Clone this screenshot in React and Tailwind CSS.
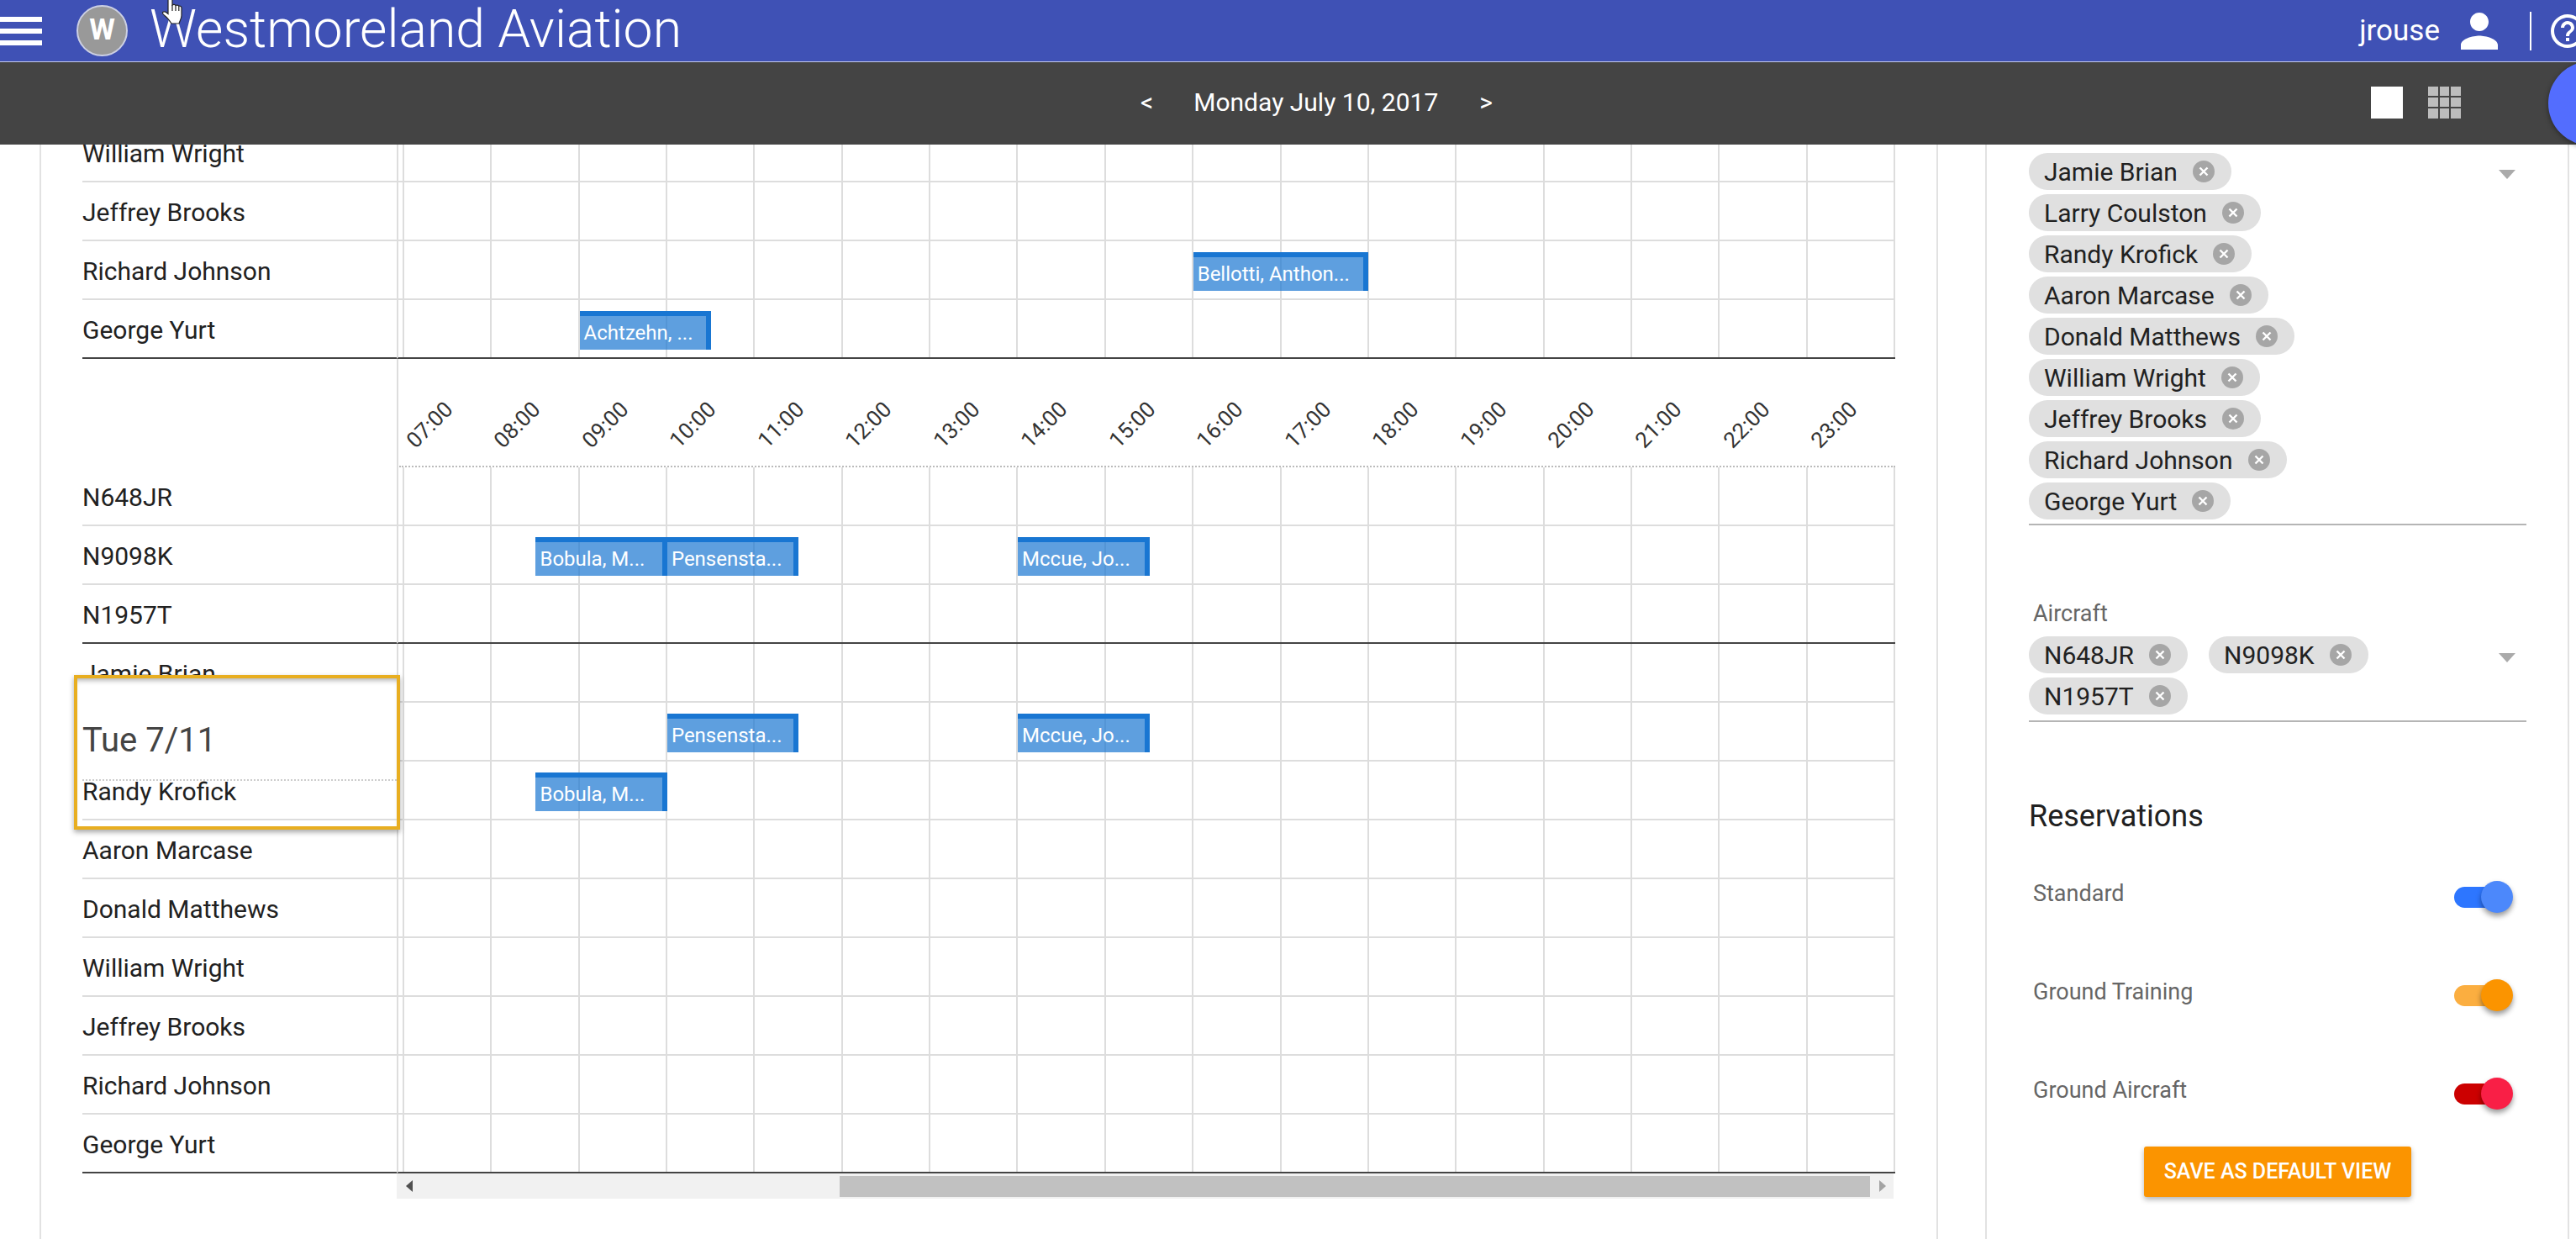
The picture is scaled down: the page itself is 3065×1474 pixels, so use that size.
const HOURS = ["07:00","08:00","09:00","10:00","11:00","12:00","13:00","14:00","15:00","16:00","17:00","18:00","19:00","20:00","21:00","22:00","23:00"];
const COL = 104.3;

const PILOTS = ["Jamie Brian","Larry Coulston","Randy Krofick","Aaron Marcase","Donald Matthews","William Wright","Jeffrey Brooks","Richard Johnson","George Yurt"];
const AIRCRAFT = ["N648JR","N9098K","N1957T"];

function Block({ start, end, text }) {
  return (
    <div
      className="absolute top-[13px] h-[46px] z-10 bg-[#1976d2]/70 border-t-[6px] border-r-[6px] border-[#1976d2] pl-[5px] text-white text-[24px] leading-[40px] whitespace-nowrap overflow-hidden"
      style={{ left: start * COL + 2, width: (end - start) * COL }}
    >
      {text}
    </div>
  );
}

function Row({ label, blocks = [], dark }) {
  const line = dark ? "border-[#444444]" : "border-[#dddddd]";
  return (
    <div className="flex h-[70px]">
      <div className={`w-[374px] shrink-0 flex items-center pt-[3px] border-b-2 text-[30px] text-[#212121] ${line}`}>{label}</div>
      <div className={`w-[1783px] shrink-0 pl-[5px] border-l-2 border-b-2 border-l-[#dddddd] ${dark ? "border-b-[#444444]" : "border-b-[#dddddd]"}`}>
        <div className="relative h-full grid grid-cols-17 border-r-2 border-r-[#dddddd]">
          {HOURS.map((h) => (
            <div key={h} className="border-l-2 border-[#dddddd]" />
          ))}
          {blocks.map((b) => (
            <Block key={b.text + b.start} {...b} />
          ))}
        </div>
      </div>
    </div>
  );
}

function Axis() {
  return (
    <div className="flex h-[129px]">
      <div className="w-[374px] shrink-0" />
      <div className="w-[1783px] shrink-0 border-l-2 border-[#dddddd]">
        <div className="ml-[1px] h-full pl-[4px] border-b-2 border-dotted border-[#bbbbbb]">
          <div className="grid grid-cols-17 h-[127px] pt-[29px] items-center">
            {HOURS.map((h) => (
              <div key={h} className="flex justify-center pr-[40px]">
                <span className="-rotate-45 text-[26px] text-[#333333] whitespace-nowrap">{h}</span>
              </div>
            ))}
          </div>
        </div>
      </div>
    </div>
  );
}

function Chip({ text }) {
  return (
    <div className="h-[44px] rounded-full bg-[#e0e0e0] pl-[18px] pr-[20px] flex items-center gap-[18px] text-[30px] text-[#212121] whitespace-nowrap">
      {text}
      <svg width="26" height="26" viewBox="0 0 26 26" className="shrink-0">
        <circle cx="13" cy="13" r="13" fill="#a6a6a6" />
        <path d="M8.5 8.5l9 9M17.5 8.5l-9 9" stroke="#ffffff" strokeWidth="2.4" />
      </svg>
    </div>
  );
}

function Caret() {
  return (
    <svg width="20" height="11" viewBox="0 0 20 11" className="absolute right-[13px] top-[20px]">
      <polygon points="0,0 20,0 10,11" fill="#aaaaaa" />
    </svg>
  );
}

function Toggle({ label, track, thumb }) {
  return (
    <div className="h-[60px] flex items-center justify-between pl-[5px] pr-[16px]">
      <span className="text-[27px] text-[#666666] pb-[8px]">{label}</span>
      <div className="relative w-[70px] h-[38px]">
        <div className={`absolute left-0 top-[7px] w-[50px] h-[25px] rounded-full ${track}`} />
        <div className={`absolute right-0 top-0 w-[38px] h-[38px] rounded-full shadow-[0_4px_6px_rgba(0,0,0,0.4)] ${thumb}`} />
      </div>
    </div>
  );
}

function Schedule() {
  return (
    <div className="ml-[47px] w-[2259px] shrink-0 border-x-2 border-[#e2e2e2] pl-[49px] -mt-[25px]">
      <Row label="William Wright" />
      <Row label="Jeffrey Brooks" />
      <Row label="Richard Johnson" blocks={[{ start: 9, end: 11, text: "Bellotti, Anthon..." }]} />
      <Row label="George Yurt" dark blocks={[{ start: 2, end: 3.5, text: "Achtzehn, ..." }]} />
      <Axis />
      <Row label="N648JR" />
      <Row label="N9098K" blocks={[
        { start: 1.5, end: 3, text: "Bobula, M..." },
        { start: 3, end: 4.5, text: "Pensensta..." },
        { start: 7, end: 8.5, text: "Mccue, Jo..." },
      ]} />
      <Row label="N1957T" dark />
      <Row label="Jamie Brian" />
      <Row label="Larry Coulston" blocks={[
        { start: 3, end: 4.5, text: "Pensensta..." },
        { start: 7, end: 8.5, text: "Mccue, Jo..." },
      ]} />
      <Row label="Randy Krofick" blocks={[{ start: 1.5, end: 3, text: "Bobula, M..." }]} />
      <Row label="Aaron Marcase" />
      <Row label="Donald Matthews" />
      <Row label="William Wright" />
      <Row label="Jeffrey Brooks" />
      <Row label="Richard Johnson" />
      <Row label="George Yurt" dark />

      {/* scrollbar */}
      <div className="ml-[374px] w-[1781px] h-[30px] bg-[#f1f1f1] flex items-center">
        <svg width="8" height="14" viewBox="0 0 8 14" className="ml-[11px]"><polygon points="8,0 8,14 0,7" fill="#505050" /></svg>
        <div className="ml-[508px] w-[1226px] h-[25px] bg-[#c1c1c1]" />
        <svg width="8" height="14" viewBox="0 0 8 14" className="ml-[11px]"><polygon points="0,0 0,14 8,7" fill="#a3a3a3" /></svg>
      </div>
    </div>
  );
}

function Filters() {
  return (
    <div className="ml-[56px] w-[695px] shrink-0 border-x-2 border-[#e2e2e2] pl-[50px] pr-[49px] pt-[10px]">
      <div className="relative flex flex-col items-start gap-[5px] border-b-2 border-[#b5b5b5] pb-[5px]">
        {PILOTS.map((p) => <Chip key={p} text={p} />)}
        <Caret />
      </div>

      <div className="mt-[89px] pl-[5px] h-[33px] text-[27px] leading-[33px] text-[#666666]">Aircraft</div>
      <div className="relative mt-[10px] flex flex-wrap w-full gap-x-[25px] gap-y-[5px] border-b-2 border-[#b5b5b5] pb-[7px] pr-[150px]">
        {AIRCRAFT.map((a) => <Chip key={a} text={a} />)}
        <Caret />
      </div>

      <div className="mt-[90px] text-[36px] leading-[44px] text-[#212121]">Reservations</div>

      <div className="mt-[44px] flex flex-col gap-[57px]">
        <Toggle label="Standard" track="bg-[#2d76ff]" thumb="bg-[#4c88fb]" />
        <Toggle label="Ground Training" track="bg-[#fbae40]" thumb="bg-[#fb9400]" />
        <Toggle label="Ground Aircraft" track="bg-[#cc0000]" thumb="bg-[#f91f46]" />
      </div>

      <div className="mt-[33px] flex justify-center">
        <button className="w-[318px] h-[60px] rounded-[3px] bg-[#fb9400] text-white text-[25px] font-medium shadow-[0_3px_6px_rgba(0,0,0,0.3)]">
          SAVE AS DEFAULT VIEW
        </button>
      </div>
    </div>
  );
}

export default function App() {
  return (
    <div className="h-[1474px] w-[3065px] overflow-hidden flex flex-col bg-white [font-family:Roboto,sans-serif]">
      {/* top bar */}
      <header className="relative z-30 h-[74px] shrink-0 bg-[#3f51b5] border-b border-[#c5cae9] flex items-center text-white overflow-hidden">
        <div className="w-[50px] flex flex-col gap-[8px]">
          <div className="h-[6px] bg-white" />
          <div className="h-[6px] bg-white" />
          <div className="h-[6px] bg-white" />
        </div>
        <div className="ml-[41px] w-[61px] h-[61px] rounded-full bg-[#999999] border-2 border-[#ccd0e4] flex items-center justify-center text-[35px] font-bold">W</div>
        <div className="ml-[26px] pb-[3px] text-[62.5px] font-light leading-[68px] whitespace-nowrap">Westmoreland Aviation</div>
        <div className="ml-auto flex items-center shrink-0">
          <span className="text-[35px] leading-none">jrouse</span>
          <svg width="66" height="66" viewBox="0 0 24 24" fill="#ffffff" className="ml-[14px]">
            <path d="M12 12c2.21 0 4-1.79 4-4s-1.79-4-4-4-4 1.79-4 4 1.79 4 4 4zm0 2c-2.67 0-8 1.34-8 4v2h16v-2c0-2.66-5.33-4-8-4z" />
          </svg>
          <div className="ml-[27px] w-[2px] h-[46px] bg-white" />
          <svg width="48" height="48" viewBox="0 0 24 24" fill="#ffffff" className="ml-[19px] -mr-[14px] shrink-0">
            <path d="M11 18h2v-2h-2v2zm1-16C6.48 2 2 6.48 2 12s4.48 10 10 10 10-4.48 10-10S17.52 2 12 2zm0 18c-4.41 0-8-3.59-8-8s3.59-8 8-8 8 3.59 8 8-3.59 8-8 8zm0-14c-2.21 0-4 1.79-4 4h2c0-1.1.9-2 2-2s2 .9 2 2c0 2-3 1.75-3 5h2c0-2.25 3-2.5 3-5 0-2.21-1.79-4-4-4z" />
          </svg>
        </div>
        {/* mouse pointer in the screenshot */}
        <svg width="26" height="34" viewBox="0 0 26 34" className="absolute left-[192px] -top-[4px]">
          <path d="M8 0h5v10c1.200-1 3.200-1 4 .5 1.200-.8 3-.6 3.800.8 1.500-.6 3.200.3 3.200 2.200v9c0 4-2 6-3 9.500H12c-2-3-4-6-7-8.500-2-1.700-4-3-3.500-4.500.5-1.500 2.500-1.500 4-.5l2.500 2z" fill="#ffffff" stroke="#222222" strokeWidth="1.200" />
          <path d="M13 10v7M17 10.500V17M20.800 11.300V17" fill="none" stroke="#222222" strokeWidth="1.200" />
        </svg>
      </header>

      {/* date bar */}
      <div className="relative z-20 h-[98px] shrink-0 bg-[#444444] flex items-center text-white text-[30px] pb-[3px] pl-[1357px] pr-[137px]">
        <span>&lt;</span>
        <span className="ml-[48px]">Monday July 10, 2017</span>
        <span className="ml-[49px]">&gt;</span>
        <div className="ml-auto w-[38px] h-[38px] bg-white" />
        <div className="ml-[30px] w-[39px] h-[38px] grid grid-cols-3 gap-[2px]">
          {[1,2,3,4,5,6,7,8,9].map((i) => <div key={i} className="bg-[#bdbdbd]" />)}
        </div>
        <div className="absolute left-[3032px] top-[-1px] w-[100px] h-[100px] rounded-full bg-[#536dfe] shadow-[0_2px_6px_rgba(0,0,0,0.4)]" />
      </div>

      <main className="relative flex-1 overflow-hidden flex">
        <Schedule />
        <Filters />

        {/* hover card over the row labels */}
        <div className="absolute z-10 left-[88px] top-[631px] w-[388px] h-[184px] border-4 border-[#e8ae20] bg-white shadow-[0_3px_6px_rgba(0,0,0,0.35),inset_0_6px_6px_-4px_rgba(0,0,0,0.35)] pl-[6px]">
          <div className="h-[120px] flex items-end pb-[26px] text-[40px] leading-none text-[#444444]">Tue 7/11</div>
          <div className="border-t-2 border-dotted border-[#cccccc] h-[47px] text-[30px] leading-[26px] text-[#212121]">Randy Krofick</div>
          <div className="border-t-2 border-[#dddddd]" />
        </div>
      </main>
    </div>
  );
}
